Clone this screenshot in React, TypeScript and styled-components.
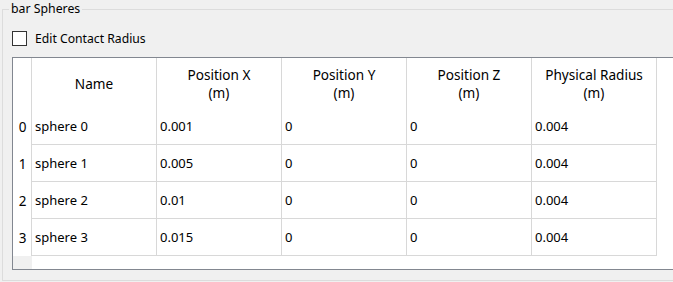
import React from "react";
import styled, { createGlobalStyle } from "styled-components";

const Global = createGlobalStyle`
  html, body {
    margin: 0;
    padding: 0;
    background: #f0f0f0;
    overflow: hidden;
  }
  body {
    font-family: "Noto Sans", "Open Sans", "Liberation Sans", sans-serif;
    font-size: 12px;
    color: #000;
  }
`;

const Screen = styled.div`
  width: 673px;
  height: 282px;
  overflow: hidden;
  background: #f0f0f0;
`;

const Group = styled.fieldset`
  box-sizing: border-box;
  margin: 1px 0 0 2px;
  width: 720px;
  height: 280px;
  border: 1px solid #dcdcdc;
  padding: 0 0 10px 9px;
  display: flex;
  flex-direction: column;
`;

const Title = styled.legend`
  margin-left: -3px;
  padding: 0 2px;
  line-height: 16px;
  height: 16px;
  font-size: 12.3px;
`;

const CheckRow = styled.label`
  display: flex;
  align-items: center;
  gap: 8px;
  height: 16px;
  margin-top: 13px;
  font-size: 12.2px;
`;

const Box = styled.span`
  box-sizing: border-box;
  width: 15px;
  height: 15px;
  border: 1px solid #333;
  background: #fff;
`;

const Table = styled.div`
  box-sizing: border-box;
  margin-top: 11px;
  width: 700px;
  height: 213px;
  border: 1px solid #828790;
  background: #fff;
  display: grid;
  grid-template-columns: 19px repeat(5, 125px) 1fr;
  grid-template-rows: 50px repeat(4, 37px) 1fr;
  font-size: 13px;
`;

const Cell = styled.div<{ $head?: boolean; $row?: boolean; $last?: boolean }>`
  box-sizing: border-box;
  border-right: ${(p) => (p.$last ? "none" : "1px solid #d8d8d8")};
  border-bottom: ${(p) => (p.$row ? "1px solid #d8d8d8" : "none")};
  display: flex;
  align-items: center;
  justify-content: ${(p) => (p.$head ? "center" : "flex-start")};
  text-align: center;
  padding: ${(p) => (p.$head ? "1px 0 0 0" : "0 0 0 3px")};
  font-size: ${(p) => (p.$head ? "13.6px" : "13px")};
  line-height: 18px;
  white-space: nowrap;
`;

const RowHead = styled.div`
  box-sizing: border-box;
  border-right: 1px solid #d8d8d8;
  display: flex;
  align-items: center;
  justify-content: center;
  padding-left: 1px;
  font-size: 13.5px;
`;

const Corner = styled.div`
  box-sizing: border-box;
  border-right: 1px solid #d8d8d8;
`;

const FillerHead = styled.div`
  background: #f0f0f0;
`;

const Filler = styled.div`
  grid-column: 2 / -1;
`;

const headers = [
  ["Name"],
  ["Position X", "(m)"],
  ["Position Y", "(m)"],
  ["Position Z", "(m)"],
  ["Physical Radius", "(m)"],
];

const rows = [
  ["sphere 0", "0.001", "0", "0", "0.004"],
  ["sphere 1", "0.005", "0", "0", "0.004"],
  ["sphere 2", "0.01", "0", "0", "0.004"],
  ["sphere 3", "0.015", "0", "0", "0.004"],
];

export default function App() {
  return (
    <Screen>
      <Global />
      <Group>
        <Title>bar Spheres</Title>
        <CheckRow>
          <Box />
          <span>Edit Contact Radius</span>
        </CheckRow>
        <Table>
          <Corner />
          {headers.map((h, i) => (
            <Cell key={i} $head>
              <div>
                {h.map((l, j) => (
                  <div key={j}>{l}</div>
                ))}
              </div>
            </Cell>
          ))}
          <Cell $head $last />
          {rows.map((r, i) => (
            <React.Fragment key={i}>
              <RowHead>{i}</RowHead>
              {r.map((v, j) => (
                <Cell key={j} $row>
                  {v}
                </Cell>
              ))}
              <Cell $last />
            </React.Fragment>
          ))}
          <FillerHead />
          <Filler />
        </Table>
      </Group>
    </Screen>
  );
}
